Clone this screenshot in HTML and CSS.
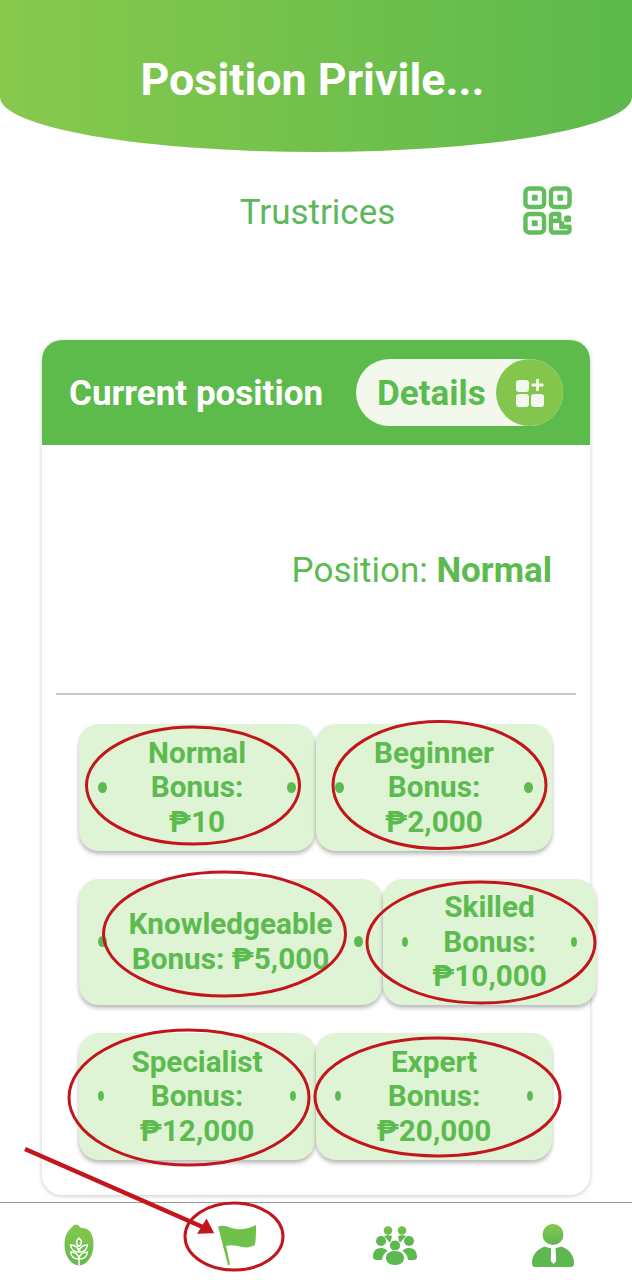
FILE: index.html
```html
<!DOCTYPE html>
<html lang="en">
<head>
<meta charset="utf-8">
<title>Position Privileges</title>
<link rel="stylesheet" href="styles.css">
</head>
<body>
<div class="page">
  <header class="hero"><h1 class="hero-title">Position Privile...</h1></header>

  <div class="user-row">
    <span class="user-name">Trustrices</span>
    <svg class="qr" viewBox="0 0 50 50" fill="none" stroke="#62bd5c" stroke-width="4.500" stroke-linejoin="round">
      <rect x="2.500" y="2.500" width="19" height="19" rx="4"/>
      <rect x="28.500" y="2.500" width="19" height="19" rx="4"/>
      <rect x="2.500" y="28.500" width="19" height="19" rx="4"/>
      <path d="M28.500 36v-5a2.500 2.500 0 0 1 2.500-2.500h6v7h-8.500zM28.500 36v9a2.500 2.500 0 0 0 2.500 2.500h14a2.500 2.500 0 0 0 2.500-2.500v-3.500H37"/>
      <g fill="#62bd5c" stroke="none">
        <rect x="9" y="9" width="6" height="6" rx="1"/>
        <rect x="35" y="9" width="6" height="6" rx="1"/>
        <rect x="9" y="35" width="6" height="6" rx="1"/>
        <rect x="37" y="36" width="5" height="5"/>
        <rect x="42" y="30" width="7" height="7" rx="2"/>
      </g>
    </svg>
  </div>

  <section class="card">
    <div class="card-head">
      <span class="card-title">Current position</span>
      <div class="pill">
        <span class="pill-label">Details</span>
        <span class="pill-icon">
          <svg class="pill-glyph" viewBox="0 0 30 30" fill="#f2f8ec">
            <rect x="1" y="2" width="13" height="12" rx="3"/>
            <rect x="1" y="16" width="13" height="13" rx="3"/>
            <rect x="16" y="16" width="13" height="13" rx="3"/>
            <path d="M21 1h3v4.500h4.500v3H24V13h-3V8.500h-4.500v-3H21z"/>
          </svg>
        </span>
      </div>
    </div>

    <p class="position-line">Position: <strong>Normal</strong></p>
    <hr class="divider">

    <div class="chips">
      <div class="chip-row">
        <div class="chip w-236"><i class="dot"></i><span class="chip-text">Normal<br>Bonus:<br>₱10</span><i class="dot"></i></div>
        <div class="chip w-236"><i class="dot"></i><span class="chip-text">Beginner<br>Bonus:<br>₱2,000</span><i class="dot"></i></div>
      </div>
      <div class="chip-row">
        <div class="chip w-303"><i class="dot"></i><span class="chip-text">Knowledgeable<br>Bonus: ₱5,000</span><i class="dot"></i></div>
        <div class="chip w-213"><i class="dot slim"></i><span class="chip-text">Skilled<br>Bonus:<br>₱10,000</span><i class="dot slim"></i></div>
      </div>
      <div class="chip-row">
        <div class="chip w-236"><i class="dot slim"></i><span class="chip-text">Specialist<br>Bonus:<br>₱12,000</span><i class="dot slim"></i></div>
        <div class="chip w-236"><i class="dot slim"></i><span class="chip-text">Expert<br>Bonus:<br>₱20,000</span><i class="dot slim"></i></div>
      </div>
    </div>
  </section>

  <nav class="tabbar">
    <div class="tab">
      <svg class="tab-icon" width="30" height="42" viewBox="0 0 30 42">
        <defs>
          <linearGradient id="g1" x1="0" y1="0" x2="0" y2="1"><stop offset="0" stop-color="#84c74e"/><stop offset="1" stop-color="#66bc4c"/></linearGradient>
        </defs>
        <path fill="url(#g1)" d="M12 .5c3 0 4 3.500 6 3.500 7 0 11.500 5 11.500 17C29.500 33 22 41.500 15 41.500S.5 33 .5 21C.5 11 4 7 7 4c2-2 3-3.500 5-3.500z"/>
        <g fill="none" stroke="#fff" stroke-width="1.500" stroke-linejoin="round">
          <path d="M15 14c3 2.500 3.500 5.500 0 8.500-3.500-3-3-6 0-8.500z"/>
          <path d="M6.500 21c4.500 0 8 2.500 8.500 7-5 0-8-2.500-8.500-7zM23.500 21c-4.500 0-8 2.500-8.500 7 5 0 8-2.500 8.500-7z"/>
          <path d="M6.500 28c4.500 0 8 2.500 8.500 7-5 0-8-2.500-8.500-7zM23.500 28c-4.500 0-8 2.500-8.500 7 5 0 8-2.500 8.500-7z"/>
          <path d="M15 35v6.500"/>
        </g>
      </svg>
    </div>
    <div class="tab">
      <svg class="tab-icon" width="40" height="42" viewBox="0 0 40 42">
        <path fill="#70c04c" d="M1 2.500C6 1 9 2 13 3.500 20 6 29 6 39 1c0 7 0 14-1 20-6 3.500-12 2.500-17 1-4-1-8-1.200-12-.3L13 40.500l-2 .8z"/>
      </svg>
    </div>
    <div class="tab">
      <svg class="tab-icon" width="44" height="42" viewBox="0 -2 44 42" fill="#5cb84f">
        <circle cx="15" cy="4.500" r="4.300" fill="#6fbf4e"/><circle cx="29" cy="4.500" r="4.300" fill="#6fbf4e"/>
        <path d="M11 10l4-1 4 1-1.500 7-3-3zM33 10l-4-1-4 1 1.500 7 3-3z"/>
        <circle cx="8" cy="15" r="5"/><circle cx="36" cy="15" r="5"/>
        <path d="M0 31c0-6 3-9 8-9 3 0 5 1 6.500 3C11 27 9.500 30 9 34 3 34.500 0 34 0 31zM44 31c0-6-3-9-8-9-3 0-5 1-6.500 3C33 27 34.500 30 35 34 41 34.500 44 34 44 31z"/>
        <circle cx="22" cy="19.500" r="5.500" stroke="#fff" stroke-width="1"/>
        <path d="M12.500 32c0-4.500 4-7.500 9.500-7.500s9.500 3 9.500 7.500-4 7.500-9.500 7.500-9.500-3-9.500-7.500z" stroke="#fff" stroke-width="1"/>
      </svg>
    </div>
    <div class="tab">
      <svg class="tab-icon" width="42" height="44" viewBox="0 0 42 44">
        <defs><linearGradient id="g2" x1="0" y1="0" x2="0" y2="1"><stop offset="0" stop-color="#84c74e"/><stop offset="1" stop-color="#5cb84f"/></linearGradient></defs>
        <circle cx="21" cy="10.500" r="10.500" fill="url(#g2)"/>
        <path fill="#5cb84f" d="M13 22.500C5 25 0 31 0 39c0 3 1 4 4 4h34c3 0 4-1 4-4 0-8-5-14-13-16.500-2.500 1-5 1.500-8 1.500s-5.500-.5-8-1.500z"/>
        <path fill="#fff" d="M19 24h4.500l.7 13-2.700 3-2.700-3z"/>
      </svg>
    </div>
  </nav>

  <svg class="marks" viewBox="0 0 632 1280" fill="none" stroke="#c3161c" stroke-width="3">
    <ellipse cx="193" cy="785.500" rx="106.500" ry="58.500"/>
    <ellipse cx="439.500" cy="785" rx="106.500" ry="63.500"/>
    <ellipse cx="224.500" cy="934" rx="121" ry="62"/>
    <ellipse cx="481" cy="942.500" rx="114" ry="60.500"/>
    <ellipse cx="189" cy="1097.500" rx="120" ry="67.500"/>
    <ellipse cx="437.500" cy="1097" rx="122.500" ry="59"/>
    <ellipse cx="234" cy="1236.500" rx="49" ry="33.500"/>
    <path d="M25 1149L205 1228" stroke-width="4.500"/>
    <path d="M213 1232.500L198.500 1233l8-13z" fill="#c3161c" stroke="#c3161c" stroke-width="1.500"/>
  </svg>
</div>
</body>
</html>
```
FILE: styles.css
```css
* { box-sizing: border-box; }
html, body { margin: 0; padding: 0; background: #fff; }
.page {
  position: relative;
  width: 632px;
  height: 1280px;
  overflow: hidden;
  display: flex;
  flex-direction: column;
  font-family: Roboto, "Liberation Sans", sans-serif;
  color: #5cbb4f;
}
.hero {
  height: 152px;
  flex: none;
  display: flex;
  justify-content: center;
  padding: 52px 7px 0 0;
  background: linear-gradient(90deg, #88c94d 0%, #5cb94c 100%);
  border-radius: 0 0 50% 50% / 0 0 55px 55px;
}
.hero-title {
  margin: 0;
  font-size: 44.800px;
  line-height: 56px;
  font-weight: 700;
  color: #fff;
  white-space: nowrap;
}
.user-row {
  height: 188px;
  flex: none;
  position: relative;
  display: flex;
  justify-content: center;
  padding-top: 40px;
  padding-left: 3px;
}
.user-name {
  font-size: 35px;
  line-height: 42px;
  font-weight: 400;
  color: #5cb85c;
}
.qr {
  position: absolute;
  left: 523px;
  top: 34px;
  width: 49px;
  height: 49px;
}
.card {
  margin-left: 42px;
  width: 548px;
  height: 855px;
  flex: none;
  background: #fff;
  border-radius: 20px;
  box-shadow: 0 1px 4px rgba(0, 0, 0, 0.22);
}
.card-head {
  height: 105px;
  display: flex;
  align-items: flex-start;
  justify-content: space-between;
  padding: 19px 27px 0 27px;
  background: #5cbb4b;
  border-radius: 20px 20px 0 0;
}
.card-title {
  font-size: 35px;
  line-height: 69px;
  font-weight: 700;
  color: #fff;
  white-space: nowrap;
}
.pill {
  width: 207px;
  height: 67px;
  display: flex;
  align-items: center;
  justify-content: space-between;
  padding-left: 21px;
  background: #f2f8ec;
  border-radius: 34px;
}
.pill-label {
  padding-top: 2px;
  font-size: 35px;
  font-weight: 700;
  color: #5cbb4f;
}
.pill-icon {
  width: 67px;
  height: 67px;
  display: flex;
  align-items: center;
  justify-content: center;
  background: #84c64d;
  border-radius: 50%;
}
.pill-glyph { width: 30px; height: 30px; }
.position-line {
  margin: 105px 38px 0 0;
  font-size: 35px;
  line-height: 42px;
  text-align: right;
  font-weight: 400;
  color: #5cbb4f;
}
.position-line strong { font-weight: 700; }
.divider {
  margin: 101px 14px 0;
  height: 2px;
  border: 0;
  background: #c8c8c8;
}
.chips {
  display: flex;
  flex-direction: column;
  gap: 28px;
  padding: 29px 0 0 37px;
}
.chip-row { display: flex; gap: 1px; }
.chip {
  flex: none;
  height: 126.500px;
  display: flex;
  align-items: center;
  justify-content: space-between;
  padding: 0 19px;
  background: #dff3d5;
  border-radius: 20px;
  box-shadow: 0 3px 4px rgba(0, 0, 0, 0.28);
}
.w-236 { width: 236px; }
.w-303 { width: 303px; }
.w-213 { width: 213px; }
.chip-text {
  font-size: 29.700px;
  line-height: 34.500px;
  font-weight: 700;
  text-align: center;
  white-space: nowrap;
  color: #5cbb4f;
}
.dot {
  flex: none;
  width: 9px;
  height: 11px;
  background: #5cbb4f;
  border-radius: 50%;
}
.dot.slim { width: 6px; height: 10px; }
.tabbar {
  margin-top: 7px;
  flex: 1;
  display: grid;
  grid-template-columns: repeat(4, 158px);
  border-top: 1px solid #9a9a9a;
}
.tab {
  display: flex;
  align-items: flex-start;
  justify-content: center;
  padding-top: 21px;
}
.tab-icon { display: block; }
.marks {
  position: absolute;
  left: 0;
  top: 0;
  width: 632px;
  height: 1280px;
  pointer-events: none;
}
```
